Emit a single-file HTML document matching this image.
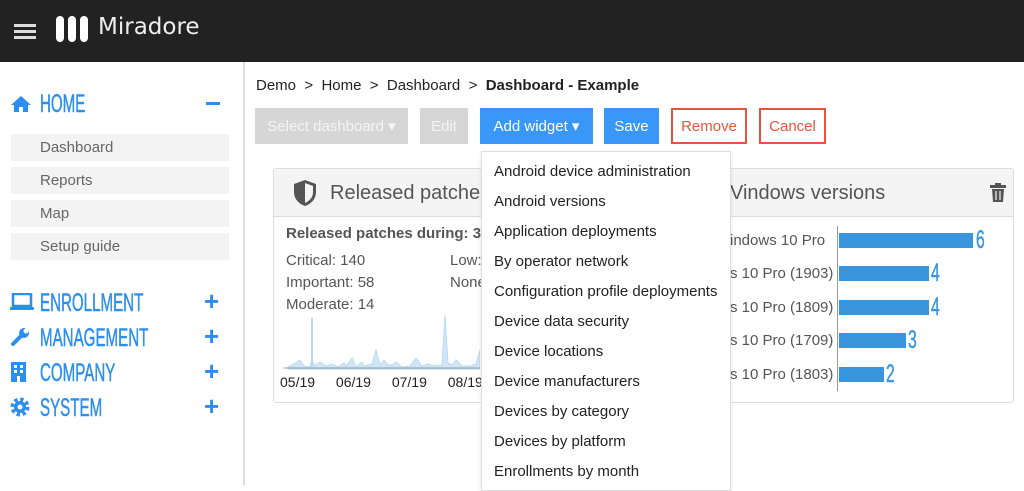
<!DOCTYPE html><html><head><style>
*{margin:0;padding:0;box-sizing:border-box}
body{width:1024px;height:485px;overflow:hidden;background:#fff;font-family:"Liberation Sans",sans-serif;position:relative;color:#333}
.a{position:absolute}
.top{left:0;top:0;width:1024px;height:62px;background:#222}
.nav{font-family:"Liberation Sans",sans-serif;color:#2b8ef0;font-size:21px;transform:scale(0.72,1.2);transform-origin:left center;white-space:nowrap;-webkit-text-stroke:0.4px #2b8ef0}
.pl{color:#2b8ef0;font-size:26px;font-weight:bold;font-family:"Liberation Sans",sans-serif}
.sub{left:11px;width:218px;height:27px;background:#f3f3f3;font-size:15px;color:#666;padding:5px 0 0 29px}
.btn{top:108px;height:36px;font-size:15px;text-align:center;line-height:37px}
.dd div{position:absolute;left:12px;font-size:15px;color:#222;white-space:nowrap}
.t{font-size:15px;color:#555;white-space:nowrap}
.bar{background:#3a96dc;height:15px;left:839px}
.num{font-family:"Liberation Sans",sans-serif;color:#3a96dc;font-size:21px;transform:scale(0.75,1.2);transform-origin:left center;-webkit-text-stroke:0.4px #3a96dc}
</style></head><body>
<div class="a top"></div>
<div class="a" style="left:14px;top:24px;width:22px;height:3px;background:#ddd;box-shadow:0 6px 0 #ddd,0 12px 0 #ddd"></div>
<div class="a" style="left:56px;top:16px;width:8px;height:26px;border-radius:4px;background:#fff"></div>
<div class="a" style="left:68px;top:16px;width:8px;height:26px;border-radius:4px;background:#fff"></div>
<div class="a" style="left:80px;top:16px;width:8px;height:26px;border-radius:4px;background:#fff"></div>
<div class="a" style="left:98px;top:14px;color:#eee;font-size:23px;font-family:'DejaVu Sans',sans-serif">Miradore</div>
<div class="a" style="left:243px;top:62px;width:2px;height:423px;background:#ddd"></div>

<svg class="a" style="left:10px;top:95px" width="22" height="18" viewBox="0 0 22 18"><path d="M11 1L1 10h3v7h5v-5h4v5h5v-7h3z" fill="#2b8ef0"/></svg>
<div class="a nav" style="left:40px;top:93px">HOME</div>
<div class="a" style="left:206px;top:102px;width:14px;height:3px;background:#2b8ef0"></div>
<div class="a sub" style="top:134px">Dashboard</div>
<div class="a sub" style="top:167px">Reports</div>
<div class="a sub" style="top:200px">Map</div>
<div class="a sub" style="top:233px">Setup guide</div>

<svg class="a" style="left:10px;top:293px" width="24" height="18"><rect x="3" y="1" width="18" height="12" fill="none" stroke="#2b8ef0" stroke-width="2.5"/><rect x="0" y="14" width="24" height="3" rx="1" fill="#2b8ef0"/></svg>
<div class="a nav" style="left:40px;top:292px">ENROLLMENT</div>
<svg class="a" style="left:10px;top:327px" width="20" height="20"><path d="M3 17L11 9" stroke="#2b8ef0" stroke-width="4" stroke-linecap="round"/><circle cx="14" cy="6" r="5" fill="#2b8ef0"/><circle cx="16" cy="4" r="2.5" fill="#fff"/></svg>
<div class="a nav" style="left:40px;top:327px">MANAGEMENT</div>
<svg class="a" style="left:11px;top:362px" width="15" height="20"><rect width="15" height="20" fill="#2b8ef0"/><g fill="#fff"><rect x="3" y="3" width="3" height="3"/><rect x="9" y="3" width="3" height="3"/><rect x="3" y="8" width="3" height="3"/><rect x="9" y="8" width="3" height="3"/><rect x="6" y="14" width="3" height="6"/></g></svg>
<div class="a nav" style="left:40px;top:362px">COMPANY</div>
<svg class="a" style="left:10px;top:397px" width="20" height="20"><circle cx="10" cy="10" r="7" fill="none" stroke="#2b8ef0" stroke-width="5" stroke-dasharray="3 2.5"/><circle cx="10" cy="10" r="6" fill="#2b8ef0"/><circle cx="10" cy="10" r="2.5" fill="#fff"/></svg>
<div class="a nav" style="left:40px;top:397px">SYSTEM</div>
<div class="a pl" style="left:204px;top:286px">+</div>
<div class="a pl" style="left:204px;top:321px">+</div>
<div class="a pl" style="left:204px;top:356px">+</div>
<div class="a pl" style="left:204px;top:391px">+</div>

<div class="a" style="left:256px;top:77px;font-size:15px;color:#222;white-space:nowrap">Demo &nbsp;&gt;&nbsp; Home &nbsp;&gt;&nbsp; Dashboard &nbsp;&gt;&nbsp; <b>Dashboard - Example</b></div>
<div class="a btn" style="left:255px;width:153px;background:#d6d6d6;color:#f4f4f4">Select dashboard ▾</div>
<div class="a btn" style="left:420px;width:48px;background:#d6d6d6;color:#f4f4f4">Edit</div>
<div class="a btn" style="left:480px;width:113px;background:#3997f7;color:#fff">Add widget ▾</div>
<div class="a btn" style="left:604px;width:55px;background:#3997f7;color:#fff">Save</div>
<div class="a btn" style="left:671px;width:76px;border:2px solid #e8533f;color:#e8533f;line-height:33px">Remove</div>
<div class="a btn" style="left:759px;width:67px;border:2px solid #e8533f;color:#e8533f;line-height:33px">Cancel</div>

<div class="a" style="left:273px;top:168px;width:741px;height:235px;border:1px solid #ddd;border-radius:3px"></div>
<div class="a" style="left:274px;top:169px;width:739px;height:48px;background:#f4f4f4;border-bottom:1px solid #ddd"></div>
<svg class="a" style="left:292px;top:179px" width="26" height="28"><path d="M13 1L2 5v8c0 7 5 12 11 14 6-2 11-7 11-14V5z" fill="#555"/><path d="M13 4v20c4-2 8-5 8-11V7z" fill="#f4f4f4"/></svg>
<div class="a" style="left:330px;top:182px;font-size:20px;color:#555;white-space:nowrap">Released patches</div>
<div class="a t" style="left:286px;top:225px;font-weight:bold">Released patches during: 30.</div>
<div class="a t" style="left:286px;top:252px">Critical: 140</div>
<div class="a t" style="left:286px;top:274px">Important: 58</div>
<div class="a t" style="left:286px;top:296px">Moderate: 14</div>
<div class="a t" style="left:450px;top:252px">Low:</div>
<div class="a t" style="left:450px;top:274px">None</div>
<svg class="a" style="left:280px;top:310px" width="200" height="60"><path d="M8 57L14 54 20 50 24 56 30 57 32 48 34 56 40 52 46 56 52 54 58 57 64 53 66 56 72 48 76 57 82 52 84 56 92 54 96 40 100 55 104 50 108 55 112 55 116 52 122 57 130 56 136 48 142 56 148 54 154 56 162 55 165 5 168 53 172 55 176 50 182 56 190 56 196 54 200 40V59H8Z" fill="#cfe6f7" stroke="#b8dcf5"/><path d="M4 58H200" stroke="#999"/><path d="M32 8V57" stroke="#b8dcf5" stroke-width="2"/></svg>
<div class="a" style="left:280px;top:374px;font-size:14px;color:#222;font-family:'Liberation Sans',sans-serif;word-spacing:17px">05/19 06/19 07/19 08/19</div>

<div class="a" style="left:730px;top:182px;font-size:20px;color:#555;white-space:nowrap">Vindows versions</div>
<svg class="a" style="left:990px;top:183px" width="16" height="19"><rect x="0" y="2" width="16" height="3" fill="#555"/><rect x="5" y="0" width="6" height="3" fill="#555"/><path d="M2 6h12l-1 13H3z" fill="#555"/><path d="M6 8v9M10 8v9" stroke="#f4f4f4" stroke-width="1.2"/></svg>
<div class="a" style="left:837px;top:226px;width:1px;height:165px;background:#999"></div>
<div class="a t" style="left:730px;top:232px">indows 10 Pro</div>
<div class="a t" style="left:730px;top:265px">s 10 Pro (1903)</div>
<div class="a t" style="left:730px;top:299px">s 10 Pro (1809)</div>
<div class="a t" style="left:730px;top:332px">s 10 Pro (1709)</div>
<div class="a t" style="left:730px;top:366px">s 10 Pro (1803)</div>
<div class="a bar" style="top:233px;width:134px"></div><div class="a num" style="left:976px;top:229px">6</div>
<div class="a bar" style="top:266px;width:90px"></div><div class="a num" style="left:931px;top:262px">4</div>
<div class="a bar" style="top:300px;width:90px"></div><div class="a num" style="left:931px;top:296px">4</div>
<div class="a bar" style="top:333px;width:67px"></div><div class="a num" style="left:908px;top:329px">3</div>
<div class="a bar" style="top:367px;width:45px"></div><div class="a num" style="left:886px;top:363px">2</div>

<div class="a dd" style="left:481px;top:151px;width:250px;height:340px;background:#fff;border:1px solid #ddd;box-shadow:0 2px 4px rgba(0,0,0,.1)">
<div style="top:11px">Android device administration</div>
<div style="top:41px">Android versions</div>
<div style="top:71px">Application deployments</div>
<div style="top:101px">By operator network</div>
<div style="top:131px">Configuration profile deployments</div>
<div style="top:161px">Device data security</div>
<div style="top:191px">Device locations</div>
<div style="top:221px">Device manufacturers</div>
<div style="top:251px">Devices by category</div>
<div style="top:281px">Devices by platform</div>
<div style="top:311px">Enrollments by month</div>
</div>
</body></html>
